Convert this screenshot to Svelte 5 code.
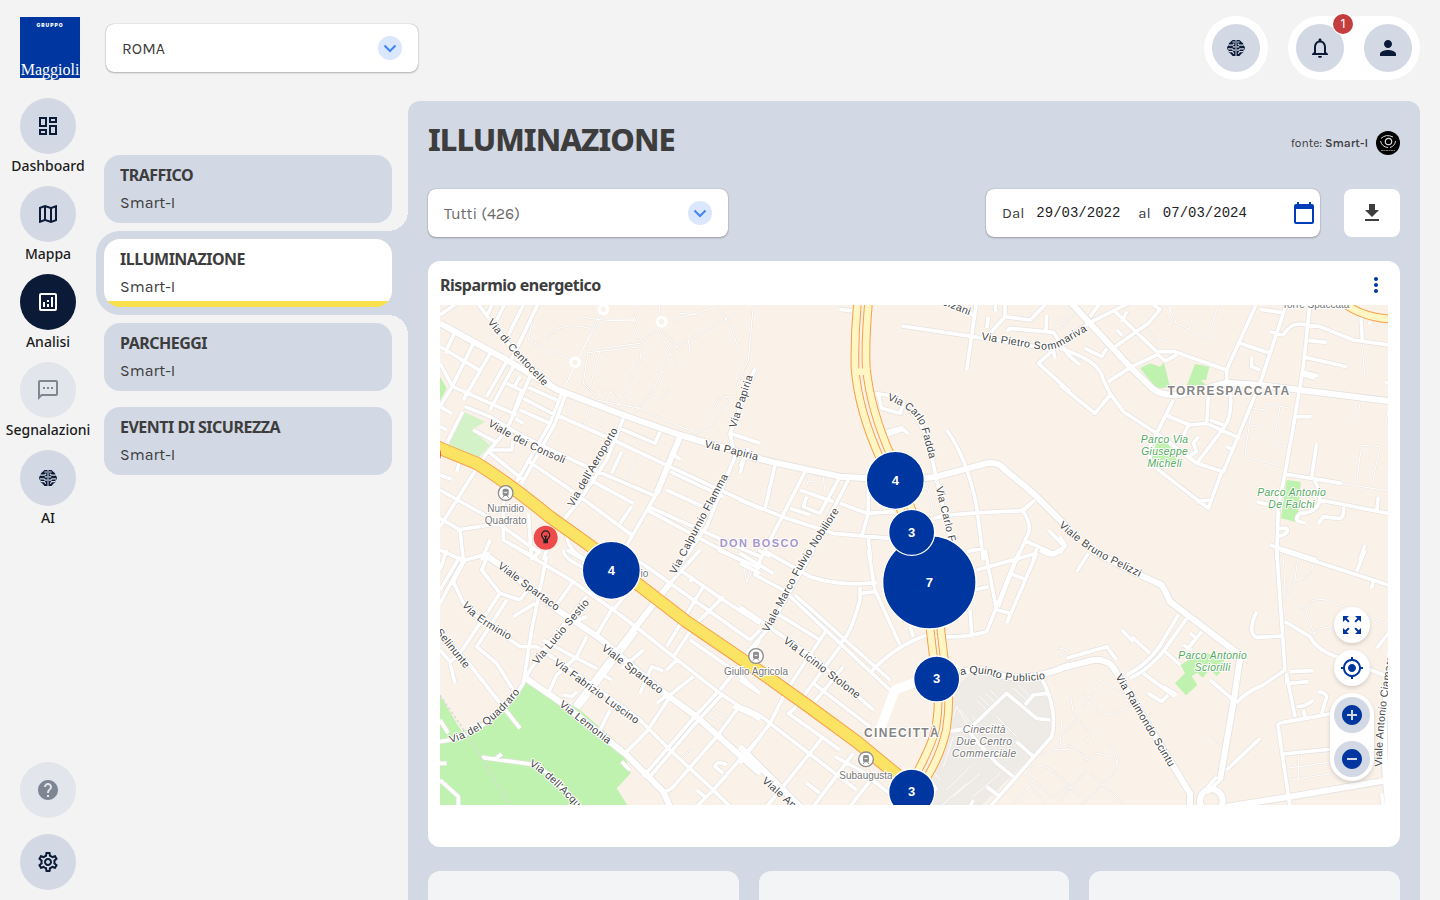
<script lang="ts">
    type Tile = { x: number; y: number; parks: string; lawn?: string; grey?: string; wide: string; roads: string; paths: string; };
    type Label = { text: string; d: string; };
    type Caption = { kind: string; x: number; y: number; lines: string[]; };

    const icons: Record<string, string> = {
        dashboard: 'M19 5v2h-4V5h4M9 5v6H5V5h4m10 8v6h-4v-6h4M9 17v2H5v-2h4M21 3h-8v6h8V3zM11 3H3v10h8V3zm10 8h-8v10h8V11zm-10 4H3v6h8v-6z',
        map: 'M20.5 3l-.16.03L15 5.1 9 3 3.36 4.9c-.21.07-.36.25-.36.48V20.5c0 .28.22.5.5.5l.16-.03L9 18.9l6 2.1 5.64-1.9c.21-.07.36-.25.36-.48V3.5c0-.28-.22-.5-.5-.5zM10 5.47l4 1.4v11.66l-4-1.4V5.47zm-5 .99l3-1.01v11.7l-3 1.16V6.46zm14 11.08l-3 1.01V6.86l3-1.16v11.84z',
        analytics: 'M19 3H5c-1.1 0-2 .9-2 2v14c0 1.1.9 2 2 2h14c1.1 0 2-.9 2-2V5c0-1.1-.9-2-2-2zm0 16H5V5h14v14zM7 12h2v5H7zM15 7h2v10h-2zM11 14h2v3h-2zM11 10h2v2h-2z',
        sms: 'M20 2H4c-1.1 0-2 .9-2 2v18l4-4h14c1.1 0 2-.9 2-2V4c0-1.1-.9-2-2-2zm0 14H5.17L4 17.17V4h16v12zM7 9h2v2H7zM11 9h2v2h-2zM15 9h2v2h-2z',
        help: 'M12 2C6.48 2 2 6.48 2 12s4.48 10 10 10 10-4.48 10-10S17.52 2 12 2zm1 17h-2v-2h2v2zm2.07-7.75l-.9.92C13.45 12.9 13 13.5 13 15h-2v-.5c0-1.1.45-2.1 1.17-2.83l1.24-1.26c.37-.36.59-.86.59-1.41 0-1.1-.9-2-2-2s-2 .9-2 2H8c0-2.21 1.79-4 4-4s4 1.79 4 4c0 .88-.36 1.68-.93 2.25z',
        settings: 'M19.43 12.98c.04-.32.07-.64.07-.98 0-.34-.03-.66-.07-.98l2.11-1.65c.19-.15.24-.42.12-.64l-2-3.46c-.09-.16-.26-.25-.44-.25-.06 0-.12.01-.17.03l-2.49 1c-.52-.4-1.08-.73-1.69-.98l-.38-2.65C14.46 2.18 14.25 2 14 2h-4c-.25 0-.46.18-.49.42l-.38 2.65c-.61.25-1.17.59-1.69.98l-2.49-1c-.06-.02-.12-.03-.18-.03-.17 0-.34.09-.43.25l-2 3.46c-.13.22-.07.49.12.64l2.11 1.65c-.04.32-.07.65-.07.98 0 .33.03.66.07.98l-2.11 1.65c-.19.15-.24.42-.12.64l2 3.46c.09.16.26.25.44.25.06 0 .12-.01.17-.03l2.49-1c.52.4 1.08.73 1.69.98l.38 2.65c.03.24.24.42.49.42h4c.25 0 .46-.18.49-.42l.38-2.65c.61-.25 1.17-.59 1.69-.98l2.49 1c.06.02.12.03.18.03.17 0 .34-.09.43-.25l2-3.46c.12-.22.07-.49-.12-.64l-2.11-1.65zm-1.98-1.71c.04.31.05.52.05.73 0 .21-.02.43-.05.73l-.14 1.13.89.7 1.08.84-.7 1.21-1.27-.51-1.04-.42-.9.68c-.43.32-.84.56-1.25.73l-1.06.43-.16 1.13-.2 1.35h-1.4l-.19-1.35-.16-1.13-1.06-.43c-.43-.18-.83-.41-1.23-.71l-.91-.7-1.06.43-1.27.51-.7-1.21 1.08-.84.89-.7-.14-1.13c-.03-.31-.05-.54-.05-.74s.02-.43.05-.73l.14-1.13-.89-.7-1.08-.84.7-1.21 1.27.51 1.04.42.9-.68c.43-.32.84-.56 1.25-.73l1.06-.43.16-1.13.2-1.35h1.39l.19 1.35.16 1.13 1.06.43c.43.18.83.41 1.23.71l.91.7 1.06-.43 1.27-.51.7 1.21-1.07.85-.89.7.14 1.13zM12 8c-2.21 0-4 1.79-4 4s1.79 4 4 4 4-1.79 4-4-1.79-4-4-4zm0 6c-1.1 0-2-.9-2-2s.9-2 2-2 2 .9 2 2-.9 2-2 2z',
        bell: 'M12 22c1.1 0 2-.9 2-2h-4c0 1.1.9 2 2 2zm6-6v-5c0-3.07-1.63-5.64-4.5-6.32V4c0-.83-.67-1.5-1.5-1.5s-1.5.67-1.5 1.5v.68C7.64 5.36 6 7.92 6 11v5l-2 2v1h16v-1l-2-2zm-2 1H8v-6c0-2.48 1.51-4.5 4-4.5s4 2.02 4 4.5v6z',
        person: 'M12 12c2.21 0 4-1.79 4-4s-1.79-4-4-4-4 1.79-4 4 1.79 4 4 4zm0 2c-2.67 0-8 1.34-8 4v2h16v-2c0-2.66-5.33-4-8-4z',
        calendar: 'M20 3h-1V1h-2v2H7V1H5v2H4c-1.1 0-2 .9-2 2v16c0 1.1.9 2 2 2h16c1.1 0 2-.9 2-2V5c0-1.1-.9-2-2-2zm0 18H4V8h16v13z',
        download: 'M19 9h-4V3H9v6H5l7 7 7-7zM5 18v2h14v-2H5z',
        more: 'M12 8c1.1 0 2-.9 2-2s-.9-2-2-2-2 .9-2 2 .9 2 2 2zm0 2c-1.1 0-2 .9-2 2s.9 2 2 2 2-.9 2-2-.9-2-2-2zm0 6c-1.1 0-2 .9-2 2s.9 2 2 2 2-.9 2-2-.9-2-2-2z',
        expand: 'M15 3l2.3 2.3-2.89 2.87 1.42 1.42L18.7 6.7 21 9V3zM3 9l2.3-2.3 2.87 2.89 1.42-1.42L6.7 5.3 9 3H3zm6 12l-2.3-2.3 2.89-2.87-1.42-1.42L5.3 17.3 3 15v6zm12-6l-2.3 2.3-2.87-2.89-1.42 1.42 2.89 2.87L15 21h6z',
        locate: 'M12 8c-2.21 0-4 1.79-4 4s1.79 4 4 4 4-1.79 4-4-1.79-4-4-4zm8.94 3c-.46-4.17-3.77-7.48-7.94-7.94V1h-2v2.06C6.83 3.52 3.52 6.83 3.06 11H1v2h2.06c.46 4.17 3.77 7.48 7.94 7.94V23h2v-2.06c4.17-.46 7.48-3.77 7.94-7.94H23v-2h-2.06zM12 19c-3.87 0-7-3.13-7-7s3.13-7 7-7 7 3.13 7 7-3.13 7-7 7z',
        plus: 'M12 2C6.48 2 2 6.48 2 12s4.48 10 10 10 10-4.48 10-10S17.52 2 12 2zm5 11h-4v4h-2v-4H7v-2h4V7h2v4h4v2z',
        minus: 'M12 2C6.48 2 2 6.48 2 12s4.48 10 10 10 10-4.48 10-10S17.52 2 12 2zm5 11H7v-2h10v2z',
    };

    const nav = [
        { label: 'Dashboard', icon: 'dashboard' },
        { label: 'Mappa', icon: 'map' },
        { label: 'Analisi', icon: 'analytics' },
        { label: 'Segnalazioni', icon: 'sms', disabled: true },
        { label: 'AI', icon: 'brain' },
    ];

    const sections = ['TRAFFICO', 'ILLUMINAZIONE', 'PARCHEGGI', 'EVENTI DI SICUREZZA'];

    let activeNav = $state('Analisi');
    let activeSection = $state('ILLUMINAZIONE');
    let from = $state('29/03/2022');
    let to = $state('07/03/2024');

    // the map is drawn at 3 units per pixel, one tile at a time
    const tiles: Tile[] = [
        {
            x: 0, y: -15,
            parks: 'M0 230L20 265L0 302Z',
            lawn: 'M150 435L110 480L20 430L68 333L135 365L95 390Z',
            wide: 'M0 70L200 180L350 268L550 345L720 405L960 475M720 410L650 580',
            roads: 'M105 0L220 150L350 268M140 50L160 5M170 60L197 5M205 105L255 5M215 178L297 5M0 45L50 10M45 95L15 160M100 130L35 262L0 320M150 160L70 300M0 140L125 215M0 190L38 260L230 345M200 185L140 290M225 190L150 330M270 230L200 390L140 460L75 560L0 680M365 280L330 370L230 545M378 280L345 370L245 550M20 430L68 335M75 320L150 350L250 410L440 500L650 590M350 345L520 420L700 505L960 625M150 450L215 450L220 420M100 390L165 425M550 355L500 480L420 600L370 660M650 580L555 745M945 205L870 400L885 470L800 680L730 780M545 455L515 520M660 395L645 430L540 385M145 455L250 540M260 480L400 575L575 705M440 510L460 545L580 610M575 620L540 670M690 515L850 590M680 570L810 630M630 622L960 770M625 632L900 780M240 330L330 370M250 295L345 345M265 262L350 300M200 250L245 272L220 340M240 230L222 262M225 355L250 370M0 570L160 660L300 760M190 600L190 720L290 775M265 640L275 780M50 690L180 670M0 655L60 690L70 780M150 720L125 780M380 690Q375 750 440 780M0 320L35 340M0 380L20 390M50 515L60 480M0 525L35 538M700 465L722 478M925 445L900 500M870 400L960 430M322 745L310 780',
            paths: 'M288 10L265 120L400 185M320 120Q350 60 450 85M485 50L410 180L370 270M480 40L375 260M600 15L580 60L500 62M660 80L600 130L445 150L430 250L470 290M605 140L445 158M580 60L605 125M665 90L720 150M480 150L450 260M605 145L600 180L550 280L570 320M655 85L690 160L640 270L580 340M650 210L680 220M690 160L725 210M940 15L925 180L890 260M870 290L820 370L770 400L640 345L600 325L470 300M657 5L660 50M700 60L830 20M690 150L890 40M830 15L880 90L895 155M745 120L750 160M405 300L385 350M455 310L430 380M500 330L470 400M590 470L560 540M490 280Q520 260 540 320M630 290L665 295L690 265M820 330Q840 280 870 290M420 50L485 60L590 60M720 40L780 45',
        },
        {
            x: 900, y: -15,
            parks: '',
            wide: 'M0 462L100 487L300 530L390 535M550 535L590 530L740 490Q775 485 790 505L880 580L990 690',
            roads: 'M400 280L440 285Q550 330 575 470L590 540L645 780M620 390Q680 470 710 620L730 780M580 655Q620 640 850 632L885 600M840 635L880 605M105 495L75 625M195 515L60 780M0 600L140 655L280 700L450 715M325 540L200 780M300 530L240 640M300 610L380 640L460 635M385 560L385 640L365 710M385 715L392 780M180 570L280 605M200 590L190 620L240 640M150 625L210 645M850 635Q880 680 860 710L830 780M850 720L940 760L975 740L925 690M485 78L700 110L860 135L940 150M710 5L680 210M610 5L700 45M298 28L340 33M750 100L795 50L870 60L920 10M800 95L810 85L940 97L985 165M940 150L895 190L990 275M745 50L740 85M795 10L795 50M920 45L918 90M765 10L768 35M850 120L848 143M415 285L425 325L480 340L490 310M440 405L490 388L505 402M440 395L490 382M680 755L730 745M55 750L90 770M20 450L0 520M890 745L880 780M940 150L945 175',
            paths: 'M40 15L25 180L0 230M210 520L200 560M250 530L255 580M205 545L220 545M420 370L490 340M560 550L580 640M75 620L140 635M990 30L965 15M940 75L990 40M960 90L990 65',
        },
        {
            x: 1860, y: -15,
            parks: 'M240 205L270 190L300 200L312 188L330 262L290 265ZM405 192L448 200L438 240L422 240L438 255L380 258ZM290 425L325 430L355 490L345 492L275 475ZM680 540L722 545L715 640L705 665L663 655Z',
            wide: 'M30 5L210 200L280 268Q320 292 370 283L500 248L600 255L985 303',
            roads: 'M0 135L85 70L215 5M120 10L90 50M160 30L290 155L345 155L500 210L500 245M290 165L215 200L145 245M290 160L315 183L350 165M280 15L300 28L265 70L165 140M200 35L185 65M170 90L187 107M75 145L125 170L140 145M20 160L60 195M0 145L40 160Q120 190 130 240L150 280L190 335L290 400L410 490L490 515L530 420L600 250L680 10M590 10L500 210M600 28L665 38M540 130L630 160M750 10L730 200L700 380L675 520L655 620L650 780M630 95L670 105Q690 70 720 72L780 80L880 120L985 135M903 50L907 120M745 122L800 127M735 172L860 200M725 215L775 228M730 225L765 235M575 170L575 200L600 210M975 248L985 248M710 350L755 350M675 522L845 550M770 430L755 530Q780 560 780 600L985 640M955 590L950 635M780 600Q770 640 720 640Q695 665 735 668M850 620Q855 660 830 655L790 650L775 670M590 605L650 620M655 685L680 685Q690 700 655 710M630 735L770 780M915 735L900 780M340 300L315 350L270 440L270 490L445 625L485 515M315 345L390 375L440 370L540 415M450 360L490 375M445 290L440 370M510 260Q520 350 490 385L410 490M415 410L400 430L410 455L385 470M385 375L360 430M410 605L450 600M150 285L105 340L0 255M500 440L520 450M930 65L930 72M0 710L15 735L0 760',
            paths: 'M575 320L555 470L670 500M620 310L690 325M660 320L640 430L680 440M575 375L600 378L600 415M580 325L615 330L620 310M330 10L330 60L445 115L475 10M900 310L890 365M985 330L975 380M845 550L985 573M890 545L905 435L960 440L935 560M905 130L915 230M0 80L70 20M250 70L290 125L322 115M385 90L395 60M320 10L350 70',
        },
        {
            x: 0, y: 735,
            parks: 'M0 435L65 545Q200 490 258 395L335 430L420 480L545 590L572 670L530 715L565 770L0 770ZM668 765L680 770L690 765Z',
            wide: 'M130 10L180 45L360 185L480 265L660 420L770 500L960 670M258 385L360 455L510 575L560 615L670 725L690 770M405 470L580 240L690 100',
            roads: 'M40 95L80 180L130 210L240 290L290 290L350 330L450 400L600 510L690 600L820 720L870 770M0 575L30 570Q180 520 250 400L275 240L320 20M255 385L310 300L440 140M415 475L590 245M690 100L780 0M240 0L400 95L520 180L600 240L700 320L840 430L960 510M520 170L470 255M560 130L520 180M400 95L350 165M440 260L410 320L350 375L325 430M310 270L400 320L470 355M480 370L515 390M370 435L395 440L410 425M700 320L760 230L850 140M680 290L790 110M600 35L690 100L790 170L930 270M720 60L850 150L960 220M750 95L760 80M750 270L880 360L960 430M930 270L960 240M600 430L635 350L670 362M545 355L610 300M690 440L620 545L555 610M680 360L715 325M690 435L760 380M830 430L760 505L610 680M845 435L775 510L625 685M890 480L830 560L700 710Q680 730 660 720M960 560L820 720L770 770M840 420L960 270M880 470L960 505M650 460L675 440M220 200L285 160M240 150L180 130L125 60L140 25M240 150L270 110M180 130L60 310M200 150L110 290L170 340L220 420M0 160L70 30M0 120L60 20M75 35L0 0M40 95L75 30L150 10M0 245L90 345L240 535M30 340L45 400M65 310L30 335L0 300M0 510L25 550M0 640L20 640M0 690L55 740L55 770M125 622L290 645Q340 680 420 770M185 612L165 628M480 540L510 480M770 720L800 745M850 670L825 650Q830 630 860 645M370 0Q370 30 450 60M0 60L20 0M835 0L960 55M280 25L300 0M380 0L450 40M545 635L570 660M400 215L440 200',
            paths: 'M790 490L850 520M810 475L860 500M905 40L920 100L935 70L910 35M760 150L800 170M780 550L800 545M730 620L755 595',
        },
        {
            x: 900, y: 735,
            parks: '',
            grey: 'M650 410L700 360L905 385L945 500L935 560L720 770L580 770L560 690L610 560Z',
            wide: 'M650 372Q700 350 760 368Q850 405 990 345M0 590L180 770',
            roads: 'M220 0L90 230L20 310M70 0L210 80Q300 110 410 98M385 0L405 120L480 285M360 110L360 150Q330 260 300 280M360 130L410 125M60 30L45 75L130 120L300 280L450 420M165 135L450 390M0 40L60 70M0 170L130 260L230 330L400 480M110 190L240 270M260 240L140 420L90 520L0 640M300 290L160 480L145 490L300 600M390 370Q460 290 560 255Q650 270 740 245L830 20M220 400L390 530M220 460L310 350M0 390L60 430M0 470Q60 490 90 520L350 720M250 560L80 770M340 610L220 770M285 620L360 660L460 740M200 700L240 730M370 580L470 660M330 770L400 680M510 230L520 260M690 180L695 250M710 60L890 10M735 0L770 180L810 190M890 10L800 220M810 70L860 90M700 120L745 110M840 0L775 170M900 0Q940 30 960 0M620 545L690 535L800 430L890 505L930 510M855 465L880 435L920 430M905 385Q955 480 935 560L750 770M690 550L770 640L820 680M830 575L880 620M740 710L780 740M0 10L100 70M570 690L590 720M690 770L700 750',
            paths: 'M10 40L20 100L30 60M710 450L750 490M720 440L760 480M735 430L775 465M750 420L785 455M820 415L860 450M835 405L870 440M640 500L650 470L680 520M660 480L690 515M700 500L715 530M620 580L600 620M640 560L610 650M560 640L600 690M620 720L690 650M640 740L720 670M700 740L780 670M600 770L680 700M880 700Q850 650 900 645Q950 660 960 690M900 620Q930 590 990 600M860 720L880 690L940 740L990 700M960 590L965 520M770 500L830 560M820 760L870 710L920 760M955 300Q960 290 985 295',
        },
        {
            x: 1860, y: 735,
            parks: 'M345 400L375 370L362 345L395 325L440 310L490 325L497 350L470 378L450 358L428 383L412 368L395 378L412 405L378 436Z',
            wide: 'M0 355L100 330Q150 325 170 370L390 730L390 770M90 0L240 75L305 105Q320 130 330 155L520 300Q545 310 538 340L520 460L480 690M500 770L690 740L985 690M985 390Q960 540 985 770M420 752A34 34 0 1 0 488 752A34 34 0 1 0 420 752',
            roads: 'M20 325L140 290L170 330M355 195L310 270Q270 340 200 375M380 205L320 290Q280 350 210 385M310 300L360 345M215 260L270 310M185 240L220 275M250 370L345 440M310 410L350 435M265 430L305 455L325 435M425 245L380 300M390 250L410 265M370 285L395 300M450 390L520 450M530 460Q550 430 610 405L675 360M650 0L675 360M680 375L705 500M690 365L760 362M690 400L745 395M680 370L680 400M820 490L665 518Q650 520 655 535L690 770M670 612L820 597M590 185Q560 250 590 262L670 258M675 215L750 260Q770 300 830 320L985 380M660 0L985 105M915 0L890 65M940 90L935 115M500 660L600 565M710 470Q740 470 760 450M730 480L735 500M775 425Q810 430 795 455L785 490M985 250L950 295M965 730L970 770M50 65L85 10M480 690L440 730M470 680L440 715M480 765L500 770',
            paths: 'M30 425L40 490L90 550L80 580M100 385Q200 420 205 470L150 495Q110 490 100 450L70 430M0 580Q50 590 80 630L110 610Q200 620 160 670L60 770M0 680L60 740M100 425L70 470M0 560L50 510M145 580Q180 620 170 640M90 670L200 770M0 750L80 660M715 10L705 90L670 150M670 20L675 120M765 30Q750 90 705 92M705 170Q740 170 740 190L765 260M740 190Q740 140 800 150L985 225M760 250Q790 220 830 240M680 655L820 635M690 690L820 670M715 615L715 690M195 360L245 330M0 295L25 300L0 320M455 560L490 590',
        },
    ];

    const highway = 'M-20 420L0 430L110 475Q200 530 330 636L450 722L590 835L740 950L960 1100L1100 1200L1250 1310L1420 1450';
    const carriageways = 'M1252 0Q1243 90 1245 190Q1255 315 1320 460L1380 610L1430 740L1470 970L1480 1055Q1505 1160 1488 1265Q1480 1310 1430 1405L1380 1500M1285 0Q1275 120 1279 190Q1292 315 1352 450L1410 600L1465 750L1502 970L1512 1055Q1537 1160 1519 1275Q1502 1350 1462 1415L1417 1500M2700 -15Q2760 38 2860 43';

    // street names follow their road; units as above, origin at the map corner
    const streets: Label[] = [
        { text: 'Via di Centocelle', d: 'M150 45L215 125L340 258' },
        { text: 'Viale dei Consoli', d: 'M148 352Q250 415 400 476' },
        { text: "Via dell'Aeroporto", d: 'M390 602L460 480L540 345' },
        { text: 'Via Papiria', d: 'M877 367L935 190' },
        { text: 'Via Papiria', d: 'M795 415L980 462' },
        { text: 'Via Calpurnio Flamma', d: 'M697 804L765 675L865 490' },
        { text: 'Via Carlo Fadda', d: 'M1345 275Q1440 305 1457 375L1490 500' },
        { text: 'Via Carlo Fadda', d: 'M1498 545L1555 780' },
        { text: 'Via Pietro Sommariva', d: 'M1625 93L1760 116Q1830 130 1855 115L1960 53' },
        { text: 'Bolzani', d: 'M1488 -20L1610 28' },
        { text: 'Viale Marco Fulvio Nobiliore', d: 'M975 978L1080 780L1215 570' },
        { text: 'Viale Bruno Pelizzi', d: 'M1863 655Q1940 725 2000 755L2140 825' },
        { text: 'Viale Spartaco', d: 'M178 778L380 928' },
        { text: 'Via Erminio', d: 'M75 893Q90 930 230 1005' },
        { text: 'Via Lucio Sestio', d: 'M283 1073L460 863' },
        { text: 'Viale Spartaco', d: 'M490 1025L700 1185' },
        { text: 'Via Fabrizio Luscino', d: 'M346 1068L470 1160L630 1275' },
        { text: 'Via Lemonia', d: 'M363 1193L540 1333' },
        { text: 'Via del Quadraro', d: 'M28 1303Q150 1270 245 1135' },
        { text: "Via dell'Acquedotto", d: 'M272 1373Q320 1390 480 1570' },
        { text: 'Selinunte', d: 'M-5 975L100 1105' },
        { text: 'Via Licinio Stolone', d: 'M1035 1002L1290 1198' },
        { text: 'Via Quinto Publicio', d: 'M1532 1110Q1590 1085 1655 1100Q1730 1135 1860 1100' },
        { text: 'Viale Appio', d: 'M972 1422L1130 1563' },
        { text: 'Via Raimondo Scintu', d: 'M2035 1110L2230 1437' },
        { text: 'Viale Antonio Ciamarra', d: 'M2815 1385Q2815 1235 2860 1000' },
    ];

    const captions: Caption[] = [
        { kind: 'stop', x: 197, y: 621, lines: ['Numidio', 'Quadrato'] },
        { kind: 'stop', x: 948, y: 1111, lines: ['Giulio Agricola'] },
        { kind: 'stop', x: 1278, y: 1421, lines: ['Subaugusta'] },
        { kind: 'stop', x: 613, y: 815, lines: ['io'] },
        { kind: 'stop', x: 2627, y: 8, lines: ['Torre Spaccata'] },
        { kind: 'place lilac', x: 959, y: 727, lines: ['DON BOSCO'] },
        { kind: 'place', x: 1386, y: 1297, lines: ['CINECITTÀ'] },
        { kind: 'place', x: 2367, y: 270, lines: ['TORRESPACCATA'] },
        { kind: 'park', x: 2174, y: 415, lines: ['Parco Via', 'Giuseppe', 'Micheli'] },
        { kind: 'park', x: 2555, y: 573, lines: ['Parco Antonio', 'De Falchi'] },
        { kind: 'park', x: 2318, y: 1063, lines: ['Parco Antonio', 'Sciorilli'] },
        { kind: 'mall', x: 1633, y: 1284, lines: ['Cinecittà', 'Due Centro', 'Commerciale'] },
    ];

    const stations = [[197, 564], [948, 1053], [1278, 1363]];
    const squares = [[490, 13], [665, 50], [405, 172]];

    const clusters = [
        { x: 1366, y: 526, r: 87, n: 4 },
        { x: 1468, y: 832, r: 140, n: 7 },
        { x: 1415, y: 682, r: 69, n: 3 },
        { x: 1490, y: 1122, r: 69, n: 3 },
        { x: 514, y: 796, r: 87, n: 4 },
        { x: 1415, y: 1461, r: 69, n: 3 },
    ];
</script>

{#snippet icon(name: string)}
    <svg class="icon" viewBox="0 0 24 24" aria-hidden="true">
        {#if name === 'brain'}
            <path d="M11.5 4H8.6L6.4 6 4.8 7.400v1.800L3.400 10.400 3 12l.4 1.600 1.400 1.200v1.800l1.600 1L8.600 20h2.900zM12.500 4h2.900l2.200 2 1.600 1.400v1.800l1.400 1.200.4 1.600-.4 1.600-1.400 1.200v1.800l-1.600 1-2.200 2.400h-2.900z" />
            <path class="folds" d="M4.800 9.200h4l1.400-1.600M8.400 6h2.600M3.800 12.800h4.200l1.200 1.400h2.200M8.800 10.800h2.600M4.800 15.600h3.600l1.400 2.200M19.200 9.200h-4L13.800 7.600M15.600 6H13M20.200 12.800H16l-1.200 1.400h-2.200M15.200 10.800h-2.600M19.200 15.600h-3.600l-1.400 2.200" />
        {:else}
            <path d={icons[name]} />
        {/if}
    </svg>
{/snippet}

{#snippet chevron()}
    <svg class="chevron" viewBox="0 0 24 24" aria-hidden="true">
        <circle cx="12" cy="12" r="12" />
        <path d="M6.500 9.500l5.500 5.500 5.500-5.500" />
    </svg>
{/snippet}

<div class="shell">
    <aside class="rail">
        <a class="logo" href="#home" aria-label="Gruppo Maggioli">
            <svg viewBox="0 0 60 64">
                <rect width="60" height="61" fill="#00369f" />
                <ellipse cx="28" cy="60.500" rx="3.500" ry="2.500" fill="#00369f" />
                <ellipse cx="36" cy="60.500" rx="3.500" ry="2.500" fill="#00369f" />
                <text class="logo-top" x="30" y="10">GRUPPO</text>
                <text class="logo-name" x="30" y="58">Maggioli</text>
            </svg>
        </a>
        <nav>
            {#each nav as item (item.label)}
                <button class="nav-item" class:active={activeNav === item.label} disabled={item.disabled} onclick={() => { activeNav = item.label; }}>
                    <span class="round">{@render icon(item.icon)}</span>
                    <span class="nav-label">{item.label}</span>
                </button>
            {/each}
        </nav>
        <div class="rail-bottom">
            <button class="round faded" disabled aria-label="Aiuto">{@render icon('help')}</button>
            <button class="round" aria-label="Impostazioni">{@render icon('settings')}</button>
        </div>
    </aside>

    <div class="content">
        <header>
            <div class="select city">
                <select aria-label="Comune"><option>ROMA</option></select>
                {@render chevron()}
            </div>
            <div class="actions">
                <div class="pill">
                    <button class="round small" aria-label="AI">{@render icon('brain')}</button>
                </div>
                <div class="pill">
                    <button class="round small" aria-label="Notifiche">
                        {@render icon('bell')}
                        <span class="badge">1</span>
                    </button>
                    <button class="round small" aria-label="Profilo">{@render icon('person')}</button>
                </div>
            </div>
        </header>

        <div class="body">
            <ul class="sections">
                {#each sections as name (name)}
                    <li class:active={activeSection === name}>
                        <button onclick={() => { activeSection = name; }}>
                            <strong>{name}</strong>
                            <span>Smart-I</span>
                        </button>
                    </li>
                {/each}
            </ul>

            <main>
                <div class="title-row">
                    <h1>ILLUMINAZIONE</h1>
                    <p class="source">
                        <span>fonte: <b>Smart-I</b></span>
                        <svg viewBox="0 0 24 24" aria-hidden="true">
                            <circle cx="12" cy="12" r="12" fill="#000" />
                            <g fill="none" stroke="#ddd">
                                <circle cx="12.500" cy="10.500" r="3.200" stroke-width="1.200" />
                                <path d="M5 7.500Q10 2.500 17 6M4.500 10Q6 16 12 16.500M19.500 10Q19 15 14 16.500" />
                            </g>
                            <path d="M5 19.500h14" stroke="#777" stroke-dasharray="2 .5" />
                        </svg>
                    </p>
                </div>

                <div class="filters">
                    <div class="select lamps">
                        <select aria-label="Lampioni"><option>Tutti (426)</option></select>
                        {@render chevron()}
                    </div>
                    <div class="range">
                        <label for="from">Dal</label>
                        <input id="from" type="text" bind:value={from} />
                        <label for="to">al</label>
                        <input id="to" type="text" bind:value={to} />
                        <button aria-label="Apri calendario">{@render icon('calendar')}</button>
                    </div>
                    <button class="download" aria-label="Scarica">{@render icon('download')}</button>
                </div>

                <section class="card">
                    <div class="card-head">
                        <h2>Risparmio energetico</h2>
                        <button aria-label="Altre opzioni">{@render icon('more')}</button>
                    </div>
                    <div class="map">
                        <svg viewBox="0 0 2844 1500" preserveAspectRatio="xMidYMid slice" role="img" aria-label="Mappa dei lampioni">
                            {#each tiles as t}
                                <g transform="translate({t.x} {t.y})">
                                    <path class="park-area" d={t.parks} />
                                    {#if t.lawn}<path class="lawn-area" d={t.lawn} />{/if}
                                    {#if t.grey}<path class="mall-area" d={t.grey} />{/if}
                                    <path class="path-casing" d={t.paths} />
                                    <path class="path" d={t.paths} />
                                </g>
                            {/each}
                            {#each tiles as t}
                                <g class="casing" transform="translate({t.x} {t.y})">
                                    <path d={t.roads} />
                                    <path class="wide" d={t.wide} />
                                </g>
                            {/each}
                            {#each tiles as t}
                                <g class="street" transform="translate({t.x} {t.y})">
                                    <path d={t.roads} />
                                    <path class="wide" d={t.wide} />
                                </g>
                            {/each}
                            <path class="avenue" d="M1430 1130L1365 1155L1335 1235L1310 1300" />
                            {#each squares as [x, y]}
                                <circle class="square" cx={x} cy={y} r="13" />
                            {/each}
                            <path class="boundary" d="M0 1170L85 1295L210 1500" />
                            <path class="yellow-casing" d={highway} />
                            <path class="yellow" d={highway} />
                            <path class="pale-casing" d={carriageways} />
                            <path class="pale" d={carriageways} />
                            <path class="pale" d="M1246 200L1280 200" />

                            {#each streets as s, i}
                                <path id="street-{i}" d={s.d} fill="none" />
                                <text class="street-name" dy="11"><textPath href="#street-{i}">{s.text}</textPath></text>
                            {/each}
                            {#each captions as c}
                                <text class={c.kind}>
                                    {#each c.lines as line, i}
                                        <tspan x={c.x} y={c.y + i * 36}>{line}</tspan>
                                    {/each}
                                </text>
                            {/each}
                            {#each stations as [x, y]}
                                <g class="station" transform="translate({x} {y})">
                                    <circle r="22" />
                                    <rect x="-9" y="-13" width="18" height="22" rx="5" />
                                    <path d="M-6 -5H6V1H-6ZM-9 14L-5 9M9 14L5 9" />
                                </g>
                            {/each}

                            <circle class="lamp" cx="-33" cy="448" r="36" />
                            <g transform="translate(317 698)">
                                <circle class="lamp" r="36" />
                                <path class="bulb" d="M-5 7Q-5 3 -9 0A12 12 0 1 1 9 0Q5 3 5 7ZM-5 11H5V15H-5ZM0 5V-4M-4 -6L0 -2L4 -6" />
                            </g>
                            {#each clusters as c}
                                <g class="cluster">
                                    <circle cx={c.x} cy={c.y} r={c.r} />
                                    <text x={c.x} y={c.y + 13}>{c.n}</text>
                                </g>
                            {/each}
                        </svg>
                        <div class="map-tools">
                            <button class="tool" aria-label="Schermo intero">{@render icon('expand')}</button>
                            <button class="tool" aria-label="La mia posizione">{@render icon('locate')}</button>
                            <div class="zoom">
                                <button aria-label="Ingrandisci">{@render icon('plus')}</button>
                                <button aria-label="Riduci">{@render icon('minus')}</button>
                            </div>
                        </div>
                    </div>
                </section>

                <div class="tiles">
                    <section></section>
                    <section></section>
                    <section></section>
                </div>
            </main>
        </div>
    </div>
</div>

<style>
    :global(body) { background: #f3f3f3; }

    .shell {
        --panel: #d2d8e4; --navy: #0b1a36; --blue: #00369f; --text: #3d3d3d;
        display: flex; height: 100vh; overflow: hidden;
        font-family: 'Noto Sans', sans-serif; color: var(--text);
    }
    .shell *, .shell *::before, .shell *::after { box-sizing: border-box; }
    button { border: none; background: none; padding: 0; margin: 0; font: inherit; color: inherit; cursor: pointer; }
    button:disabled { cursor: default; }
    .icon { display: block; width: 24px; height: 24px; fill: currentColor; }
    .folds { fill: none; stroke: var(--panel); stroke-width: 1.2; }

    .rail { width: 96px; flex: none; display: flex; flex-direction: column; padding: 17px 0 10px; }
    .logo { display: block; width: 60px; height: 64px; margin: 0 0 17px 20px; }
    .logo svg { display: block; }
    .logo-top { font: 900 5px 'Inter', sans-serif; fill: #fff; text-anchor: middle; letter-spacing: 1px; }
    .logo-name { font: 16px 'Liberation Serif', serif; fill: #fff; text-anchor: middle; }
    nav { display: flex; flex-direction: column; gap: 8px; }
    .nav-item { display: flex; flex-direction: column; align-items: center; height: 80px; }
    .nav-label { font-size: 14px; line-height: 24px; font-weight: 500; color: #1c1c1c; }
    .round {
        width: 56px; height: 56px; border-radius: 50%; background: var(--panel); color: var(--navy);
        display: flex; align-items: center; justify-content: center;
    }
    .nav-item.active .round { background: var(--navy); color: #fff; }
    .nav-item:disabled .round, .faded { opacity: 0.5; }
    .rail-bottom { margin-top: auto; display: flex; flex-direction: column; align-items: center; gap: 16px; }

    .content { flex: 1; min-width: 0; display: flex; flex-direction: column; }
    header { display: flex; justify-content: space-between; align-items: center; height: 96px; flex: none; padding: 0 20px 0 10px; margin-bottom: 5px; }
    .select { position: relative; background: #fff; border-radius: 8px; box-shadow: 0 1px 2px rgba(0, 0, 0, 0.25), 0 0 1px rgba(0, 0, 0, 0.4); }
    .select select {
        appearance: none; width: 100%; height: 48px; border: none; background: none; padding: 0 56px 0 16px;
        font: 16px 'Karla', 'Inter', sans-serif; color: var(--text); display: block;
    }
    .chevron { position: absolute; right: 16px; top: 12px; width: 24px; height: 24px; pointer-events: none; }
    .chevron circle { fill: #dbe7fe; }
    .chevron path { fill: none; stroke: #4285f4; stroke-width: 2; }
    .city { width: 312px; }
    .actions { display: flex; gap: 20px; }
    .pill { display: flex; gap: 20px; padding: 8px; border-radius: 32px; background: #fff; }
    .small { position: relative; width: 48px; height: 48px; }
    .badge {
        position: absolute; top: -10px; right: -9px; width: 20px; height: 20px; border-radius: 50%;
        background: #c43d3f; color: #fff; font: 12px/20px 'Inter', sans-serif; box-shadow: 0 0 0 1px #fff;
    }

    .body { flex: 1; min-height: 0; display: flex; padding-right: 20px; }
    .sections { list-style: none; margin: 0; padding: 46px 0 0; width: 312px; flex: none; }
    .sections li { position: relative; padding: 8px 16px 8px 8px; border-radius: 24px 0 0 24px; }
    .sections button {
        display: flex; flex-direction: column; align-items: flex-start; width: 100%; height: 68px;
        padding: 6px 16px; border-radius: 16px; background: var(--panel); text-align: left; overflow: hidden;
    }
    .sections strong { font-size: 16px; line-height: 28px; font-weight: 700; letter-spacing: -0.5px; }
    .sections span { font: 16px/28px 'Karla', 'Inter', sans-serif; }
    .sections .active { background: var(--panel); }
    .sections .active button { background: linear-gradient(#fff 62px, #fae04b 62px); }
    .sections .active::before, .sections .active::after { content: ''; position: absolute; right: 0; width: 20px; height: 20px; }
    .sections .active::before { bottom: 100%; background: radial-gradient(circle at 0 0, transparent 20px, var(--panel) 20px); }
    .sections .active::after { top: 100%; background: radial-gradient(circle at 0 100%, transparent 20px, var(--panel) 20px); }

    main { flex: 1; min-width: 0; background: var(--panel); border-radius: 12px 12px 0 0; padding: 20px; }
    .title-row { display: flex; justify-content: space-between; height: 44px; margin-bottom: 24px; }
    h1 { margin: 0; font-size: 31px; line-height: 36px; font-weight: 800; letter-spacing: -1px; }
    .source { margin: 0; display: flex; align-items: center; gap: 8px; font: 12px 'Karla', 'Inter', sans-serif; }
    .source b { font-weight: 600; }
    .source svg { width: 24px; height: 24px; }

    .filters { display: flex; gap: 24px; margin-bottom: 24px; }
    .lamps { width: 300px; margin-right: auto; }
    .lamps select { color: #6b6b6b; }
    .range {
        display: flex; align-items: center; width: 334px; height: 48px; padding: 0 4px 0 16px; background: #fff;
        border-radius: 8px; box-shadow: 0 1px 2px rgba(0, 0, 0, 0.25), 0 0 1px rgba(0, 0, 0, 0.4);
        font: 15px 'Karla', 'Inter', sans-serif;
    }
    .range input { width: 86px; margin: 0 16px 0 12px; border: none; padding: 0; font: 14px 'Liberation Mono', monospace; color: #222; }
    .range button { margin-left: auto; color: #003db8; }
    .download { width: 56px; height: 48px; border-radius: 8px; background: #fff; display: flex; align-items: center; justify-content: center; }

    .card { background: #fff; border-radius: 12px; padding: 0 12px 42px; margin-bottom: 24px; }
    .card-head { display: flex; align-items: center; justify-content: space-between; height: 44px; padding-top: 4px; }
    h2 { margin: 0; font-size: 16px; font-weight: 700; letter-spacing: -0.5px; }
    .card-head button { color: var(--blue); }
    .map { position: relative; height: 500px; background: #faf1e8; overflow: hidden; }
    .map > svg { display: block; width: 100%; height: 100%; font-family: 'Liberation Sans', sans-serif; }

    .park-area { fill: #bff2ae; }
    .lawn-area { fill: #d3f2c8; }
    .mall-area { fill: #eeebe7; }
    .path-casing, .path { fill: none; stroke-linejoin: round; }
    .path-casing { stroke: #ebe6e1; stroke-width: 6; }
    .path { stroke: #fff; stroke-width: 3; }
    .casing path, .street path { fill: none; stroke-linejoin: round; }
    .casing path { stroke: #e4e2e0; stroke-width: 15; }
    .casing .wide { stroke-width: 23; }
    .street path { stroke: #fff; stroke-width: 11; }
    .street .wide { stroke-width: 18; }
    .avenue { fill: none; stroke: #fff; stroke-width: 28; stroke-linejoin: round; }
    .square { fill: #faf1e8; stroke: #fff; stroke-width: 10; }
    .boundary { fill: none; stroke: #dcd6dc; stroke-width: 4; stroke-dasharray: 9 6; }
    .yellow-casing, .yellow, .pale-casing, .pale { fill: none; stroke-linejoin: round; }
    .yellow-casing { stroke: #f7a04b; stroke-width: 40; }
    .yellow { stroke: #fbe363; stroke-width: 34; }
    .pale-casing { stroke: #f7a04b; stroke-width: 26; }
    .pale { stroke: #fff6c4; stroke-width: 20; }

    .map text { paint-order: stroke; stroke: #fff; stroke-width: 6px; stroke-linejoin: round; }
    .map .street-name { font-size: 32px; fill: #454545; letter-spacing: 1px; }
    .stop, .park, .mall, .place { text-anchor: middle; font-size: 30px; fill: #777; }
    .park, .mall { font-size: 31px; font-style: italic; letter-spacing: 1px; }
    .park { fill: #55a960; }
    .place { font-size: 36px; font-weight: 700; fill: #858585; letter-spacing: 4px; }
    .lilac { font-size: 33px; fill: #a596cc; }
    .station { fill: #fff; stroke: #8d8d8d; stroke-width: 4; }
    .station rect { fill: #8d8d8d; stroke: none; }
    .station path { fill: #fff; stroke-width: 3; }
    .lamp { fill: #ed4b4b; }
    .bulb { fill: none; stroke: #222; stroke-width: 4; }
    .cluster circle { fill: var(--blue); stroke: #fff; stroke-width: 4; }
    .map .cluster text { font-size: 39px; font-weight: 700; fill: #fff; stroke: none; text-anchor: middle; }

    .map-tools { position: absolute; right: 14px; bottom: 24px; display: flex; flex-direction: column; align-items: center; gap: 7px; color: var(--blue); }
    .map-tools button { width: 36px; height: 36px; border-radius: 50%; display: flex; align-items: center; justify-content: center; }
    .tool, .zoom { background: #fff; box-shadow: 0 2px 4px rgba(0, 0, 0, 0.15); }
    .zoom { display: flex; flex-direction: column; gap: 8px; padding: 4px; border-radius: 22px; }
    .zoom button { background: var(--panel); }

    .tiles { display: grid; grid-template-columns: repeat(3, 1fr); gap: 20px; }
    .tiles section { height: 240px; border-radius: 12px; background: #f3f4f6; }
</style>
